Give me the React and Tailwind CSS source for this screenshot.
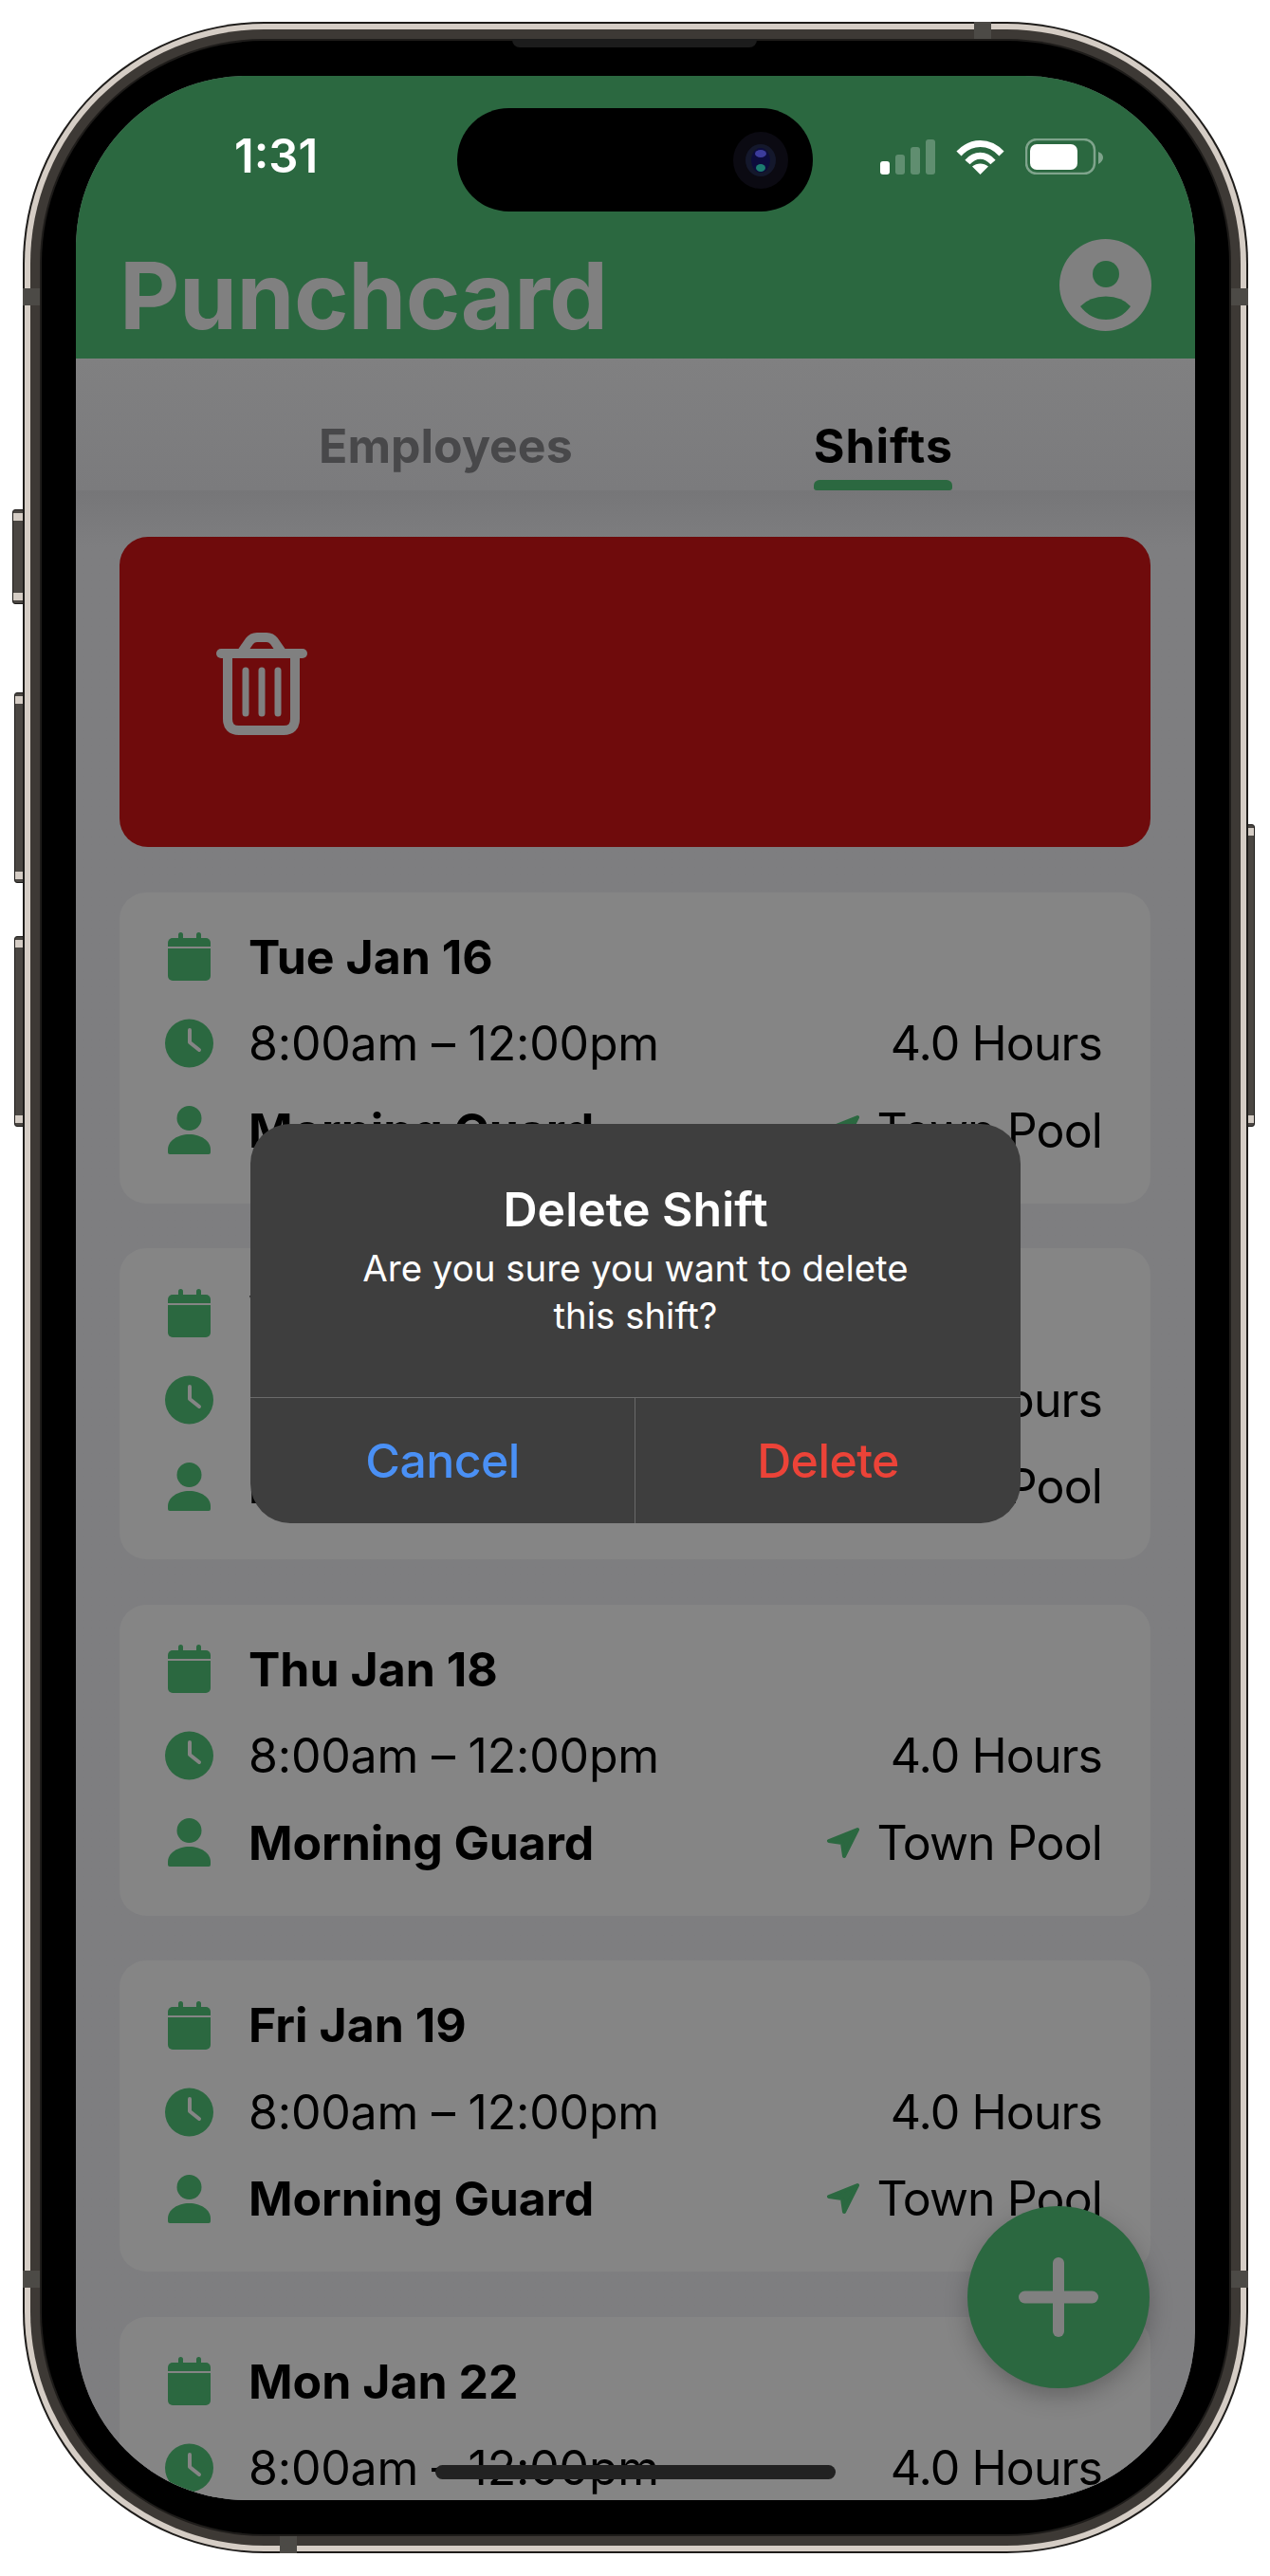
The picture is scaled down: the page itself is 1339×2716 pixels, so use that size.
import React from 'react';

const days = ['Tue Jan 16', 'Wed Jan 17', 'Thu Jan 18', 'Fri Jan 19', 'Mon Jan 22'];

const CalendarIcon = () => (
  <svg width="45" height="51" viewBox="0 0 45 51" fill="#2b6840">
    <rect x="11" y="0" width="5" height="10" rx="2.5" />
    <rect x="30" y="0" width="5" height="10" rx="2.5" />
    <path d="M0 15V11a5 5 0 0 1 5-5h35a5 5 0 0 1 5 5v4z" />
    <path d="M0 17h45v29a5 5 0 0 1-5 5H5a5 5 0 0 1-5-5z" />
  </svg>
);

const ClockIcon = () => (
  <svg width="51" height="52" viewBox="0 0 51 52">
    <circle cx="25.5" cy="26" r="25.5" fill="#2b6840" />
    <path d="M26 12V25L36 33" fill="none" stroke="#858585" strokeWidth="4" strokeLinecap="round" strokeLinejoin="round" />
  </svg>
);

const PersonIcon = () => (
  <svg width="45" height="51" viewBox="0 0 45 51" fill="#2b6840">
    <circle cx="22.5" cy="13" r="13" />
    <path d="M0 49V46C0 37 10 30 22.5 30S45 37 45 46V49A2 2 0 0 1 43 51H2A2 2 0 0 1 0 49Z" />
  </svg>
);

const ArrowIcon = () => (
  <svg width="34" height="34" viewBox="0 0 34 34" fill="#2b6840" stroke="#2b6840" strokeWidth="4" strokeLinejoin="round">
    <path d="M32 3L2 15L16 17L18 31Z" />
  </svg>
);

const TrashIcon = () => (
  <svg width="96" height="108" viewBox="0 0 96 108" fill="none" stroke="#808080" strokeLinecap="round" strokeLinejoin="round">
    <path d="M5 22H91" strokeWidth="10" />
    <path d="M26 22L35 9Q38 5 43 5H53Q58 5 61 9L70 22" strokeWidth="10" />
    <path d="M12 22V91Q12 103 24 103H71Q83 103 83 91V22" strokeWidth="10" />
    <path d="M31 40V85M48 40V85M65 40V85" strokeWidth="7" />
  </svg>
);

const AvatarIcon = () => (
  <svg width="97" height="97" viewBox="0 0 97 97">
    <circle cx="48.5" cy="48.5" r="48.5" fill="#808080" />
    <circle cx="49" cy="37" r="14" fill="#2b6840" />
    <path d="M22 71Q32 60.5 49 60.5Q66 60.5 75 71Q65 85 49 85Q33 85 22 71Z" fill="#2b6840" />
  </svg>
);

const StatusIcons = () => (
  <div className="flex items-center gap-[22px]">
    <svg width="58" height="37" viewBox="0 0 58 37" fill="#ffffff">
      <rect x="0" y="23" width="10" height="14" rx="3" />
      <rect x="16" y="16" width="10" height="21" rx="3" fillOpacity="0.25" />
      <rect x="32" y="8" width="10" height="29" rx="3" fillOpacity="0.25" />
      <rect x="48" y="0" width="10" height="37" rx="3" fillOpacity="0.25" />
    </svg>
    <svg width="51" height="37" viewBox="0 0 51 37" fill="none" stroke="#ffffff" strokeWidth="7">
      <path d="M3 15C16 1 35 1 48 15" />
      <path d="M12 24C20 15 31 15 39 24" />
      <path d="M25.5 37L17 28.5C22 24.5 29 24.5 34 28.5Z" fill="#ffffff" stroke="none" />
    </svg>
    <svg width="82" height="38" viewBox="0 0 82 38">
      <rect x="1" y="1" width="72" height="36" rx="11" fill="none" stroke="#ffffff" strokeOpacity="0.4" strokeWidth="2.5" />
      <rect x="5" y="6" width="50" height="27" rx="7" fill="#ffffff" />
      <path d="M77 14Q82 16 82 20Q82 24 77 27Z" fill="#ffffff" fillOpacity="0.4" />
    </svg>
  </div>
);

const Camera = () => (
  <svg width="58" height="62" viewBox="0 0 58 62">
    <ellipse cx="29" cy="31" rx="29" ry="30" fill="#0b0a12" />
    <ellipse cx="29" cy="31" rx="16" ry="17" fill="#14182c" />
    <ellipse cx="29" cy="31" rx="10" ry="13" fill="#0c0c3c" />
    <ellipse cx="29" cy="24" rx="6" ry="4" fill="#3c3c9c" />
    <ellipse cx="29" cy="39" rx="5" ry="4" fill="#1c7c70" />
  </svg>
);

const SideButton = ({ className }) => (
  <div className={`absolute flex flex-col justify-between py-[3px] bg-[#4a4642] border border-[#1e1c1a] ${className}`}>
    <div className="h-[8px] bg-[#d5cdc5]" />
    <div className="h-[8px] bg-[#d5cdc5]" />
  </div>
);

const ShiftCard = ({ day }) => (
  <div className="h-[328px] shrink-0 rounded-[28px] bg-[#858585] pl-[48px] pr-[51px] pt-[38px] flex flex-col gap-[31.5px] text-[50px] leading-[60px] text-black">
    <div className="h-[60px] flex items-center gap-[37px]">
      <div className="w-[51px] flex justify-center"><CalendarIcon /></div>
      <span className="font-bold">{day}</span>
    </div>
    <div className="h-[60px] flex items-center justify-between">
      <div className="flex items-center gap-[37px]">
        <div className="w-[51px] flex justify-center"><ClockIcon /></div>
        <span className="tracking-[-0.2px]">8:00am – 12:00pm</span>
      </div>
      <span className="tracking-[-0.9px]">4.0 Hours</span>
    </div>
    <div className="h-[60px] flex items-center justify-between">
      <div className="flex items-center gap-[37px]">
        <div className="w-[51px] flex justify-center"><PersonIcon /></div>
        <span className="font-bold tracking-[-0.1px]">Morning Guard</span>
      </div>
      <div className="flex items-center gap-[18px]">
        <ArrowIcon />
        <span className="tracking-[-0.9px]">Town Pool</span>
      </div>
    </div>
  </div>
);

const DeleteDialog = () => (
  <div className="absolute left-[184px] top-[1105px] w-[812px] h-[421px] rounded-[42px] bg-[#3e3e3e] flex flex-col text-center text-white">
    <div className="h-[289px] pt-[60px] border-b border-[#6a6a6a]">
      <p className="text-[50px] leading-[60px] font-semibold">Delete Shift</p>
      <p className="mt-[7px] text-[38.4px] leading-[50px]">Are you sure you want to delete<br />this shift?</p>
    </div>
    <div className="flex-1 grid grid-cols-2 text-[50px] font-medium tracking-[-0.6px]">
      <div className="flex items-center justify-center text-[#4a90f5] border-r border-[#6a6a6a]">Cancel</div>
      <div className="flex items-center justify-center text-[#ec4338]">Delete</div>
    </div>
  </div>
);

const Screen = () => (
  <div className="relative w-[1180px] h-[2556px] rounded-[180px] overflow-hidden flex flex-col bg-[#7e7e80] font-['Inter',sans-serif]">
    <header className="h-[298px] shrink-0 bg-[#2b6840] pt-[66px]">
      <div className="h-[38px] pl-[167px] pr-[97px] flex items-center justify-between">
        <span className="text-[49px] leading-[38px] font-semibold text-white">1:31</span>
        <StatusIcons />
      </div>
      <div className="mt-[68px] h-[96px] pl-[46px] pr-[46px] flex items-start justify-between">
        <span className="pt-[12px] text-[98px] leading-[96px] font-bold tracking-[-0.5px] text-[#808080]">Punchcard</span>
        <AvatarIcon />
      </div>
    </header>

    <nav className="h-[139px] shrink-0 flex justify-center items-end gap-[254px] pl-[1px] bg-gradient-to-b from-[#808081] to-[#7b7b7d] text-[50px] font-bold">
      <div className="h-[139px] pt-[62px] leading-[60px] text-[#48484a]">Employees</div>
      <div className="h-[139px] pt-[62px] leading-[60px] tracking-[1px] text-black flex flex-col items-center justify-between">
        <span>Shifts</span>
        <div className="w-[146px] h-[11px] rounded-t-[6px] rounded-b-[3px] bg-[#2b6840]" />
      </div>
    </nav>

    <main className="flex-1 overflow-hidden pl-[46px] pr-[47px] pt-[49px] flex flex-col gap-[47.5px] bg-gradient-to-b from-[#767678] to-[#7e7e80] to-[60px]">
      <div className="h-[327px] shrink-0 rounded-[30px] bg-[#6f0b0c] pl-[102px] pb-[17px] flex items-center">
        <TrashIcon />
      </div>
      {days.map((day) => (
        <ShiftCard key={day} day={day} />
      ))}
    </main>

    {/* floating stuff */}
    <div className="absolute left-[402px] top-[34px] w-[375px] h-[109px] rounded-full bg-black flex items-center justify-end pr-[26px]">
      <Camera />
    </div>
    <DeleteDialog />
    <button className="absolute left-[940px] top-[2246px] w-[192px] h-[192px] rounded-full bg-[#2b6840] shadow-[0_8px_24px_rgba(0,0,0,0.25)] flex items-center justify-center">
      <svg width="84" height="84" viewBox="0 0 84 84" fill="#808080">
        <rect x="36" y="0" width="12" height="84" rx="6" />
        <rect x="0" y="35.5" width="84" height="13" rx="6.5" />
      </svg>
    </button>
    <div className="absolute left-[379px] top-[2519px] w-[422px] h-[15px] rounded-full bg-[#222222]" />
  </div>
);

const App = () => (
  <div className="relative w-[1339px] h-[2716px] bg-white pl-[24px] pt-[23px] overflow-hidden">
    {/* side buttons */}
    <SideButton className="left-[13px] top-[537px] w-[12px] h-[100px] rounded-l-[3px]" />
    <SideButton className="left-[15px] top-[730px] w-[10px] h-[201px] rounded-l-[3px]" />
    <SideButton className="left-[15px] top-[987px] w-[10px] h-[201px] rounded-l-[3px]" />
    <SideButton className="left-[1315px] top-[869px] w-[8px] h-[319px] rounded-r-[3px]" />

    <div className="relative w-[1292px] h-[2669px] rounded-[255px] bg-[#1e1c1a] p-[2px]">
      <div className="w-full h-full rounded-[253px] bg-[#d5cdc5] p-[6px]">
        <div className="w-full h-full rounded-[247px] bg-[#3d3935] p-[10px]">
          <div className="w-full h-full rounded-[237px] bg-[#1e1c1a] p-[2px]">
            <div className="w-full h-full rounded-[235px] bg-black pt-[37px] pl-[36px]">
              <Screen />
            </div>
          </div>
        </div>
      </div>

      {/* speaker + antenna lines */}
      <div className="absolute left-[516px] top-[18px] w-[258px] h-[9px] rounded-b-[8px] bg-[#1c1c1c]" />
      <div className="absolute left-[1003px] top-0 w-[18px] h-[18px] bg-[#4c4a46]" />
      <div className="absolute left-0 top-[281px] w-[18px] h-[18px] bg-[#4c4a46]" />
      <div className="absolute right-0 top-[281px] w-[18px] h-[18px] bg-[#4c4a46]" />
      <div className="absolute left-0 top-[2371px] w-[18px] h-[18px] bg-[#4c4a46]" />
      <div className="absolute right-0 top-[2371px] w-[18px] h-[18px] bg-[#4c4a46]" />
      <div className="absolute left-[271px] bottom-0 w-[18px] h-[18px] bg-[#4c4a46]" />
    </div>
  </div>
);

export default App;
